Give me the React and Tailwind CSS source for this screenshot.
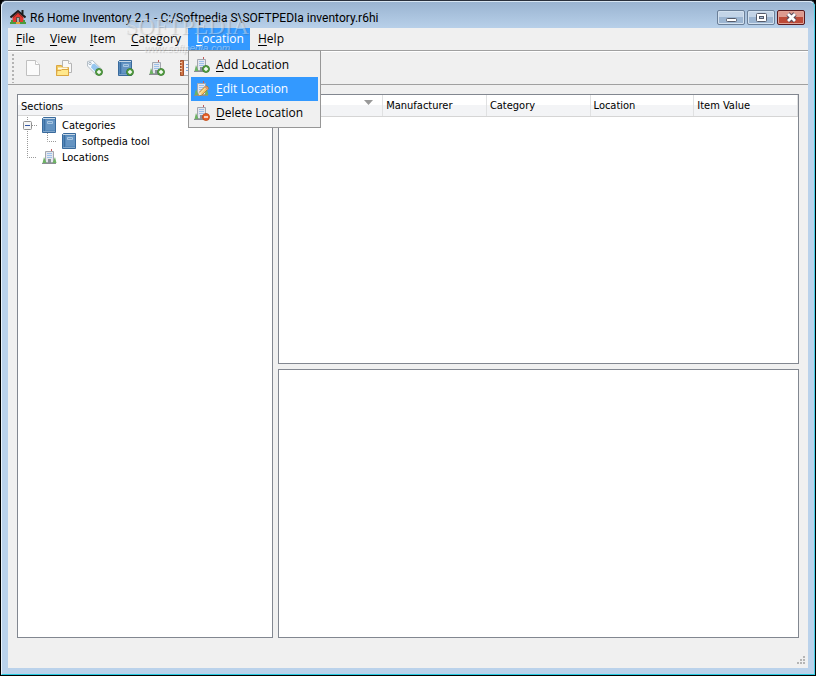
import React, { useState } from 'react';

const HouseIcon = () => (
  <svg width="16" height="16" viewBox="0 0 16 16">
    <path d="M2.500 8 L8 3 L13.500 8 V14 H2.500 Z" fill="#e2382f" />
    <path d="M0.500 8.500 L8 2 L15.500 8.500" fill="none" stroke="#1d1d1d" strokeWidth="2" />
    <path d="M3 8.500 L8 4.200 L13 8.500" fill="none" stroke="#8d2320" />
    <rect x="11.500" y="1" width="2" height="4" fill="#1d1d1d" />
    <rect x="6" y="8" width="4" height="6" fill="#6d4a3f" />
    <rect x="7" y="9" width="2" height="5" fill="#a9b0ac" />
    <path d="M0 14 H16" stroke="#4d9a3d" strokeWidth="2" />
    <rect x="6" y="13" width="4" height="2" fill="#e8a33a" />
    <rect x="1" y="11" width="2" height="3" fill="#4d9a3d" />
    <rect x="13" y="11" width="2" height="3" fill="#4d9a3d" />
  </svg>
);

const Badge = ({ type }) => (
  <g>
    <circle cx="12" cy="12" r="3.500" fill={type === 'add' ? '#5ba548' : '#e8602a'} stroke={type === 'add' ? '#34752a' : '#bb4712'} strokeWidth="0.800" />
    <path d={type === 'add' ? 'M12 10 V14 M10 12 H14' : 'M10 12 H14'} stroke="#fff" strokeWidth="1.400" />
  </g>
);

const Pencil = () => (
  <g>
    <path d="M4.500 14.500 L5.500 11 L11.500 5 Q14 4.500 14.500 7.500 L8.500 13.500 Z" fill="#f3c667" stroke="#ae7325" strokeWidth="0.800" />
    <path d="M6.500 12 L12.500 6" stroke="#fff0b5" />
    <path d="M4.500 14.500 L5.500 11 L8 13.500 Z" fill="#f4e4c4" />
    <path d="M11 5.500 L14 8.500" stroke="#dd8b72" strokeWidth="1.500" />
  </g>
);

const BuildingIcon = ({ badge }) => (
  <svg width="16" height="16" viewBox="0 0 16 16" className="shrink-0">
    <path d="M9.500 0 V3" stroke="#c35a5a" />
    <path d="M3.500 2.500 H11.500 V13.500 H3.500 Z" fill="#e4e7ee" stroke="#a3a6ae" />
    <path d="M5 4.500 H10 M5 6.500 H10 M5 8.500 H10" stroke="#9dc0ea" />
    <path d="M6 10 H9 V14 H6 Z" fill="#8b909a" />
    <path d="M0.500 14 L2 8 L4.500 14 Z M10.500 14 L13 8 L14.500 14 Z" fill="#6db264" />
    <path d="M0 14.500 H14" stroke="#8a8e92" />
    {badge === 'edit' ? <Pencil /> : badge && <Badge type={badge} />}
  </svg>
);

const BookIcon = ({ badge }) => (
  <svg width="16" height="16" viewBox="0 0 16 16" className="shrink-0">
    <path d="M1.500 0.500 H13.500 V15.500 H0.500 V1.500 Z" fill="#5488bb" stroke="#396a9c" />
    <path d="M2.500 2 V14" stroke="#3d6fa1" />
    <path d="M1 1.500 H13" stroke="#c8d9e8" />
    <path d="M4 3 H13 V13 H4 Z" fill="#6594c2" />
    <path d="M5.500 4.500 H10.500 V6.500 H5.500 Z" fill="#6e9cc8" stroke="#a9c7e2" />
    <path d="M1 14.500 H13" stroke="#7fa5c9" />
    {badge && <Badge type={badge} />}
  </svg>
);

const PageIcon = () => (
  <svg width="16" height="16" viewBox="0 0 16 16">
    <path d="M1.500 0.500 H10.500 L14.500 4.500 V15.500 H1.500 Z" fill="#fbfbfb" stroke="#c0c0c0" />
    <path d="M10.500 0.500 V4.500 H14.500" fill="#fff" stroke="#c5c5c5" />
  </svg>
);

const OpenIcon = () => (
  <svg width="16" height="16" viewBox="0 0 16 16">
    <path d="M6.500 0.500 H12.500 L15.500 3.500 V12.500 H6.500 Z" fill="#f8f8f8" stroke="#b4b4b4" />
    <path d="M12.500 0.500 V3.500 H15.500" fill="#fff" stroke="#bcbcbc" />
    <path d="M0.500 5.500 H5.500 L6.500 7.500 H12.500 V15.500 H0.500 Z" fill="#f0c95b" stroke="#dba642" />
    <path d="M2 7.500 H11.500 V9.500 H2 Z" fill="#fff9e3" />
    <path d="M1 10.500 H5 L6 9.500 H12.500 V15.500 H0.500 Z" fill="#ffe88c" stroke="#dba642" />
  </svg>
);

const TagIcon = () => (
  <svg width="16" height="16" viewBox="0 0 16 16">
    <path d="M0.500 1.500 L5.500 0.500 L14.500 9 L9 14.500 L0.500 6 Z" fill="#f7fbff" stroke="#b5bec6" />
    <path d="M5 4.500 L7.500 3.500 L13 8.500 L9 12.500 L4 7.500 Z" fill="#96c6ef" />
    <circle cx="3" cy="3.500" r="1.200" fill="#fff" stroke="#8fa1b3" strokeWidth="0.800" />
    <Badge type="add" />
  </svg>
);

const NotebookIcon = () => (
  <svg width="16" height="16" viewBox="0 0 16 16">
    <path d="M0.500 0.500 H14.500 V15.500 H0.500 Z" fill="#f5f5fa" stroke="#aaa" />
    <path d="M0.500 0.500 H3.500 V15.500 H0.500 Z" fill="#cf7547" stroke="#a2512d" />
    <path d="M0 2.500 H2 M0 5.500 H2 M0 8.500 H2 M0 11.500 H2" stroke="#f0c8a8" />
    <path d="M6 4.500 H12 M6 7.500 H12 M6 10.500 H12" stroke="#80aada" />
  </svg>
);

const tools = [
  { name: 'New', icon: <PageIcon /> },
  { name: 'Open', icon: <OpenIcon /> },
  { name: 'Add Item', icon: <TagIcon /> },
  { name: 'Add Category', icon: <BookIcon badge="add" /> },
  { name: 'Add Location', icon: <BuildingIcon badge="add" /> },
  { name: 'Report', icon: <NotebookIcon /> },
];

const menus = [
  { name: 'File', width: 'w-[34px]' },
  { name: 'View', width: 'w-[40px]' },
  { name: 'Item', width: 'w-[41px]' },
  { name: 'Category', width: 'w-[65px]' },
  { name: 'Location', width: 'w-[62px]' },
  { name: 'Help', width: 'w-[40px]' },
];

const locationItems = [
  { name: 'Add Location', badge: 'add' },
  { name: 'Edit Location', badge: 'edit' },
  { name: 'Delete Location', badge: 'delete' },
];

const columns = ['', 'Manufacturer', 'Category', 'Location', 'Item Value'];

// First letter is the keyboard mnemonic
const Mnemonic = ({ text }) => (
  <span>
    <span className="underline underline-offset-2">{text[0]}</span>
    {text.slice(1)}
  </span>
);

const TitleBar = () => (
  <header className="flex h-[26px] items-center pl-[2px] pr-[3px] pt-1">
    <HouseIcon />
    <h1 className="ml-1 flex-1 truncate pt-[2px] font-['Roboto',sans-serif] text-[12px] leading-4 text-black">
      R6 Home Inventory 2.1 - C:/Softpedia S\SOFTPEDIa inventory.r6hi
    </h1>
    <div className="flex gap-[2px]">
      <button aria-label="Minimize" className="flex h-[15px] w-7 items-center justify-center rounded-xs border border-[#6b7f98] bg-linear-to-b from-[#c3d4e7] from-50% to-[#9db6d2] to-50% shadow-[inset_0_0_0_1px_#d3e1ef]">
        <svg width="13" height="11" viewBox="0 0 13 11">
          <rect x="1.500" y="6.500" width="10" height="3" rx="1" fill="#fff" stroke="#555b6a" />
        </svg>
      </button>
      <button aria-label="Maximize" className="flex h-[15px] w-7 items-center justify-center rounded-xs border border-[#6b7f98] bg-linear-to-b from-[#c3d4e7] from-50% to-[#9db6d2] to-50% shadow-[inset_0_0_0_1px_#d3e1ef]">
        <svg width="13" height="11" viewBox="0 0 13 11">
          <rect x="1.500" y="1.500" width="10" height="8" rx="1" fill="#fff" stroke="#555b6a" />
          <rect x="4.500" y="4.500" width="4" height="2" fill="#a9bfd8" stroke="#555b6a" />
        </svg>
      </button>
      <button aria-label="Close" className="flex h-[15px] w-7 items-center justify-center rounded-xs border border-[#5a1a1f] bg-linear-to-b from-[#dd9a8f] from-50% to-[#bd4a38] to-50% shadow-[inset_0_0_0_1px_#e0a397]">
        <svg width="13" height="11" viewBox="0 0 13 11">
          <path d="M3 2 L10 9 M10 2 L3 9" stroke="#55495a" strokeWidth="4.600" />
          <path d="M3 2 L10 9 M10 2 L3 9" stroke="#fff" strokeWidth="2.800" />
        </svg>
      </button>
    </div>
  </header>
);

const MenuBar = ({ open, setOpen }) => {
  const [active, setActive] = useState('Edit Location');

  return (
    <nav className="flex h-[23px] border-b border-[#a0a0a0] font-['Open_Sans','Noto_Sans',sans-serif]">
      {menus.map((menu) => (
        <div key={menu.name} className={`relative ${menu.width}`}>
          <button
            onClick={() => setOpen(open === menu.name ? '' : menu.name)}
            className={`h-[22px] w-full whitespace-nowrap pl-2 text-left text-[12px] leading-[22px] ${
              open === menu.name ? 'bg-[#3399ff] text-white' : 'text-black'
            }`}
          >
            <Mnemonic text={menu.name} />
          </button>
          {menu.name === 'Location' && open === 'Location' && (
            <div role="menu" className="absolute left-0 top-[22px] z-20 w-[133px] border border-[#979797] bg-[#f0f0f0] p-[2px]">
              {locationItems.map((item) => (
                <button
                  key={item.name}
                  role="menuitem"
                  onMouseEnter={() => setActive(item.name)}
                  className={`flex h-6 w-full items-center gap-[6px] whitespace-nowrap pl-[3px] text-[12px] ${
                    active === item.name ? 'bg-[#3399ff] text-white' : 'text-black'
                  }`}
                >
                  <BuildingIcon badge={item.badge} />
                  <Mnemonic text={item.name} />
                </button>
              ))}
            </div>
          )}
        </div>
      ))}
    </nav>
  );
};

const ToolBar = () => (
  <div className="flex h-[34px] items-center border-b border-t border-b-[#a0a0a0] border-t-white pl-1">
    <svg width="3" height="29" viewBox="0 0 3 29">
      <path d="M1 0 V29" stroke="#b3b3b3" strokeWidth="2" strokeDasharray="2 2" />
    </svg>
    <div className="ml-[10px] flex gap-[15px]">
      {tools.map((tool) => (
        <button key={tool.name} aria-label={tool.name} title={tool.name}>
          {tool.icon}
        </button>
      ))}
    </div>
  </div>
);

const Sections = () => (
  <section className="border border-[#828790] bg-white">
    <h2 className="h-[21px] border-b border-[#d5d5d5] bg-linear-to-b from-white from-50% to-[#f3f4f6] to-50% pl-[3px] leading-[23px]">
      Sections
    </h2>
    <div className="flex pl-[5px] pt-px">
      <svg width="19" height="48" viewBox="0 0 19 48" className="shrink-0">
        <path d="M4.500 0 V40.500 H14 M9 8.500 H14" fill="none" stroke="#999" strokeDasharray="1 1" />
        <rect x="0.500" y="4.500" width="8" height="8" rx="1" fill="#f6f6f6" stroke="#919191" />
        <path d="M2 8.500 H7" stroke="#3356a5" />
      </svg>
      <ul className="leading-4">
        <li>
          <div className="flex h-4 items-center gap-1">
            <BookIcon />
            <span className="pt-[2px]">Categories</span>
          </div>
          <ul>
            <li className="flex h-4 items-center pl-1">
              <svg width="16" height="16" viewBox="0 0 16 16" className="shrink-0">
                <path d="M1.500 0 V8.500 H10" fill="none" stroke="#999" strokeDasharray="1 1" />
              </svg>
              <BookIcon />
              <span className="ml-1 pt-[2px]">softpedia tool</span>
            </li>
          </ul>
        </li>
        <li className="flex h-4 items-center gap-1">
          <BuildingIcon />
          <span className="pt-[2px]">Locations</span>
        </li>
      </ul>
    </div>
  </section>
);

const ItemTable = () => (
  <section className="overflow-hidden border border-[#828790] bg-white">
    <table className="w-full table-fixed border-collapse">
      <thead>
        <tr className="h-[21px] bg-linear-to-b from-white from-50% to-[#f3f4f6] to-50%">
          {columns.map((column) => (
            <th key={column} className="h-[21px] border-b border-r border-b-[#d5d5d5] border-r-[#e0e1e2] p-0 pl-[3px] text-left align-top font-normal leading-5">
              {column ? (
                <span className="block h-5 pt-px">{column}</span>
              ) : (
                <svg width="9" height="5" viewBox="0 0 9 5" className="ml-auto mr-[9px] mt-[5px]" role="img" aria-label="Sorted descending">
                  <path d="M0 0 H9 L4.500 5 Z" fill="#999" />
                </svg>
              )}
            </th>
          ))}
        </tr>
      </thead>
    </table>
  </section>
);

const Watermark = () => (
  <div className="pointer-events-none absolute left-[124px] top-[12px] z-10 flex w-[124px] flex-col items-center font-['Liberation_Serif',serif] text-white/40">
    <span className="text-[23px] leading-[28px] [text-shadow:1px_1px_1px_rgba(80,80,80,0.25)]">SOFTPEDIA</span>
    <span className="font-['Liberation_Sans',sans-serif] text-[10px] italic leading-4 [text-shadow:1px_1px_1px_rgba(80,80,80,0.25)]">www.softpedia.com</span>
  </div>
);

const App = () => {
  const [open, setOpen] = useState('Location');

  return (
    <div className="min-h-screen bg-black">
      <div className="relative flex min-h-screen flex-col rounded-t-md border border-black border-t-[#29303c] bg-[#b9d1ea] font-['DejaVu_Sans_Condensed','DejaVu_Sans',sans-serif] text-[11px] text-black">
        <div className="flex flex-1 flex-col rounded-t-md border border-b-[#24c9df] border-l-[#e9f3fb] border-r-[#48cfe5] border-t-[#d8e6f3] bg-linear-to-b from-[#9ab4d1] to-[#bad2eb] to-[28px] px-[6px] pb-[6px]">
          <TitleBar />
          <main className="flex flex-1 flex-col bg-[#f0f0f0]">
            <MenuBar open={open} setOpen={setOpen} />
            <ToolBar />
            <div className="grid flex-1 grid-cols-[256px_1fr] gap-[5px] px-[9px] pt-[9px]">
              <Sections />
              <div className="grid grid-rows-2 gap-[5px]">
                <ItemTable />
                <section className="border border-[#828790] bg-white" />
              </div>
            </div>
            <footer className="flex h-[30px] items-end justify-end p-[2px]">
              <svg width="10" height="10" viewBox="0 0 10 10">
                <path d="M7 1 H9 M4 4 H6 M7 4 H9 M1 7 H3 M4 7 H6 M7 7 H9" stroke="#b5b5b5" strokeWidth="2" />
              </svg>
            </footer>
          </main>
        </div>
        <Watermark />
      </div>
    </div>
  );
};

export default App;
